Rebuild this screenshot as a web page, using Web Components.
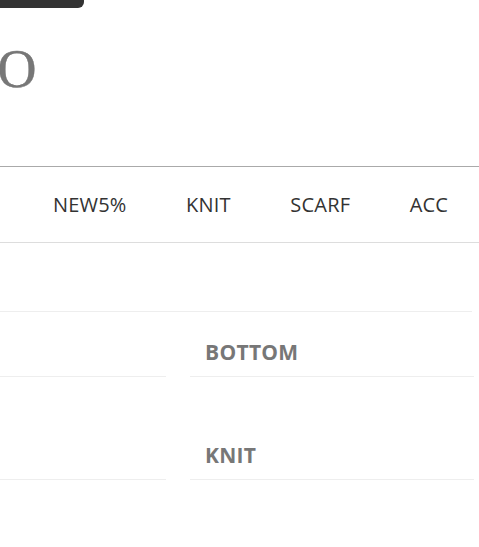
<!DOCTYPE html>
<html>
<head>
<meta charset="utf-8">
<title>shop</title>
<style>
html,body{margin:0;padding:0;background:#fff;overflow:hidden;height:100%}
</style>
</head>
<body>
<shop-header></shop-header>
<shop-nav>
    <shop-nav-item>NEW5%</shop-nav-item>
    <shop-nav-item>KNIT</shop-nav-item>
    <shop-nav-item>SCARF</shop-nav-item>
    <shop-nav-item>ACC</shop-nav-item>
</shop-nav>
<category-list>
    <category-cell></category-cell>
    <category-cell>BOTTOM</category-cell>
    <category-cell></category-cell>
    <category-cell>KNIT</category-cell>
</category-list>
<script>
class ShopHeader extends HTMLElement {
    constructor(){
        super()
        this.attachShadow({mode:'open'})
        this.shadowRoot.innerHTML=`
        <style>
        :host{display:block;height:166px;overflow:hidden}
        .bar{width:84px;height:8px;background:#333;border-radius:0 0 6px 0}
        .logo{
            margin:34px 0 0 -2.5px;
            font:54px/54px "Liberation Serif",serif;
            color:#777;
            -webkit-text-stroke:.4px #777;
        }
        </style>
        <div class="bar"></div>
        <div class="logo">O</div>`
    }
}
class ShopNav extends HTMLElement {
    constructor(){
        super()
        this.attachShadow({mode:'open'})
        this.shadowRoot.innerHTML=`
        <style>
        :host{
            display:flex;
            align-items:center;
            gap:59.5px;
            height:75px;
            padding-left:53px;
            border-top:1px solid #aaa;
            border-bottom:1px solid #ddd;
            white-space:nowrap;
        }
        </style>
        <slot></slot>`
    }
}
class ShopNavItem extends HTMLElement {
    constructor(){
        super()
        this.attachShadow({mode:'open'})
        this.shadowRoot.innerHTML=`
        <style>
        :host{display:block;font:20px/26px "Open Sans",sans-serif;letter-spacing:.2px;color:#333}
        </style>
        <slot></slot>`
    }
}
class CategoryList extends HTMLElement {
    constructor(){
        super()
        this.attachShadow({mode:'open'})
        this.shadowRoot.innerHTML=`
        <style>
        :host{display:block;margin-top:68px;width:474px}
        .top{width:472px;border-top:1px solid #eee}
        .grid{display:grid;grid-template-columns:166px 284px;column-gap:24px}
        </style>
        <div class="top"></div>
        <div class="grid"><slot></slot></div>`
    }
}
class CategoryCell extends HTMLElement {
    constructor(){
        super()
        this.attachShadow({mode:'open'})
        this.shadowRoot.innerHTML=`
        <style>
        :host{
            display:flex;
            align-items:flex-end;
            height:103px;
            box-sizing:border-box;
            padding:0 0 11px 15px;
            border-bottom:1px solid #eee;
            font:bold 21px/26px "Open Sans",sans-serif;
            letter-spacing:.3px;
            color:#777;
        }
        :host(:nth-child(-n+2)){height:65px;padding-bottom:11px}
        </style>
        <slot></slot>`
    }
}
customElements.define('shop-header',ShopHeader)
customElements.define('shop-nav',ShopNav)
customElements.define('shop-nav-item',ShopNavItem)
customElements.define('category-list',CategoryList)
customElements.define('category-cell',CategoryCell)
</script>
</body>
</html>
